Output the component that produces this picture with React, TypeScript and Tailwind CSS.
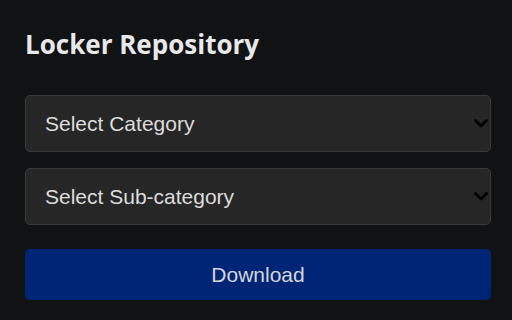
import React from "react";

function Chevron() {
  return (
    <svg width="14" height="9" viewBox="0 0 14 9" fill="none">
      <path d="M1.5 1.5 L7 7 L12.5 1.5" stroke="#000" strokeWidth="2.8" strokeLinecap="round" strokeLinejoin="round" />
    </svg>
  );
}

function SelectBox({ label }: { label: string }) {
  return (
    <div className="flex h-[57px] items-center justify-between rounded-[5px] border border-[#3a3a3a] bg-[#262626] pl-[19px] pr-[2px]">
      <span className="text-[21px] text-[#dcdcdc]" style={{ fontFamily: '"Liberation Sans", Arial, sans-serif' }}>
        {label}
      </span>
      <Chevron />
    </div>
  );
}

export default function App() {
  return (
    <div className="h-[320px] w-[512px] bg-[#111214] pl-[25px] pr-[21px] pt-[27px]">
      <h1 className="text-[26px] font-bold leading-[34px] text-[#e8e8ea]" style={{ fontFamily: '"Open Sans", "Noto Sans", sans-serif' }}>
        Locker Repository
      </h1>
      <div className="mt-[34px] flex flex-col gap-[16px]">
        <SelectBox label="Select Category" />
        <SelectBox label="Select Sub-category" />
      </div>
      <button
        className="mt-[24px] flex h-[51px] w-full items-center justify-center rounded-[5px] bg-[#002577] text-[21px] text-[#d6d6d6]"
        style={{ fontFamily: '"Liberation Sans", Arial, sans-serif' }}
      >
        Download
      </button>
    </div>
  );
}
